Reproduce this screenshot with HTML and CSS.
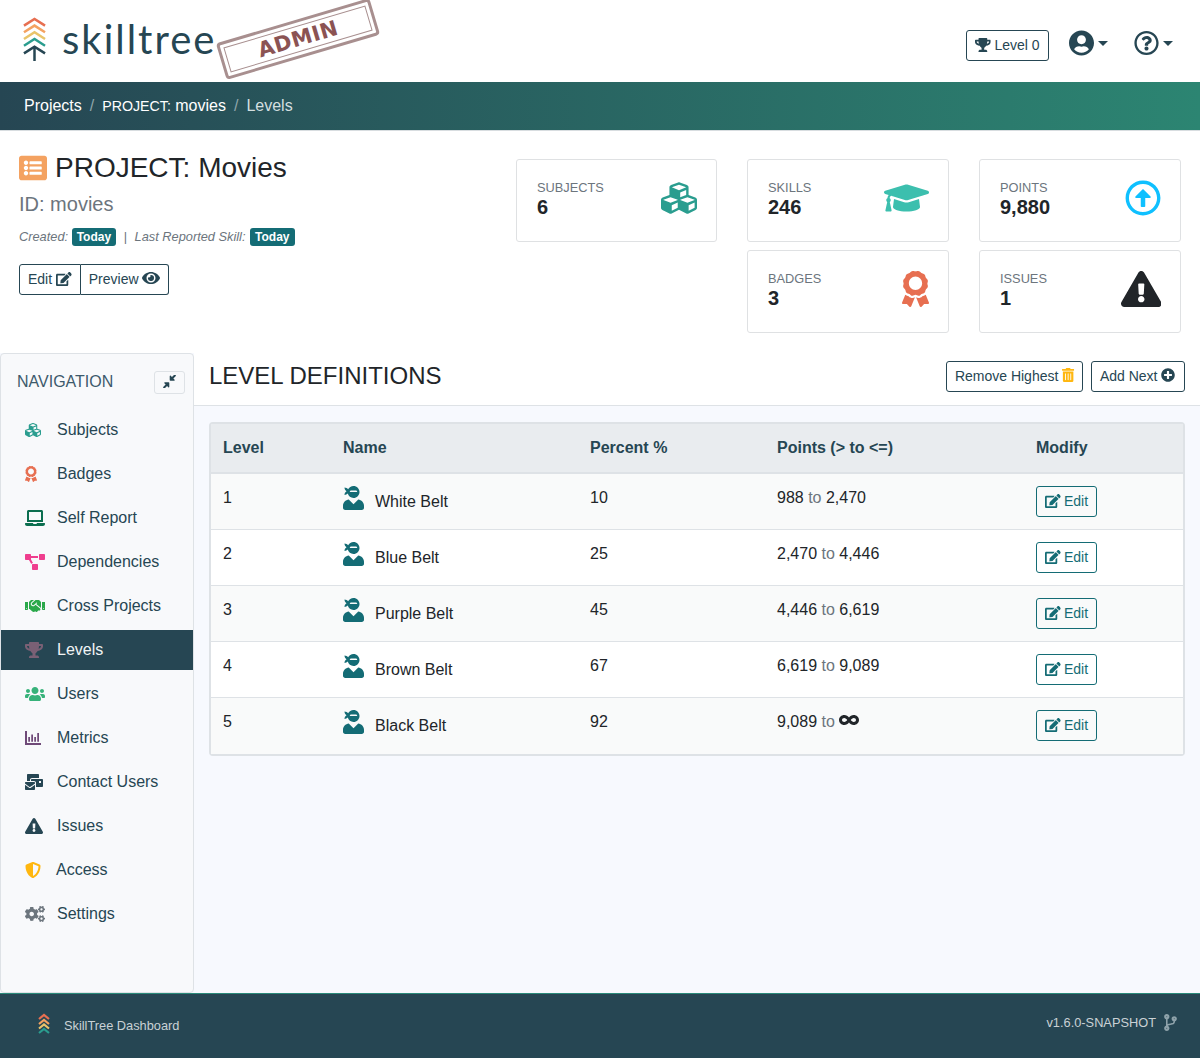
FILE: index.html
```html
<!DOCTYPE html>
<html lang="en">
<head>
<meta charset="utf-8">
<title>SkillTree Dashboard</title>
<link rel="stylesheet" href="styles.css">
</head>
<body>
<svg class="sprite" xmlns="http://www.w3.org/2000/svg">
<symbol id="trophy" viewBox="0 0 576 512"><path d="M552 64H448V24c0-13.3-10.7-24-24-24H152c-13.3 0-24 10.7-24 24v40H24C10.7 64 0 74.7 0 88v56c0 35.7 22.5 72.4 61.9 100.7 31.5 22.7 69.8 37.1 110 41.7C203.3 338.5 240 360 240 360v72h-48c-35.3 0-64 20.7-64 56v12c0 6.6 5.4 12 12 12h296c6.6 0 12-5.4 12-12v-12c0-35.3-28.7-56-64-56h-48v-72s36.7-21.5 68.1-73.6c40.3-4.6 78.6-19 110-41.7 39.3-28.3 61.9-65 61.9-100.7V88c0-13.3-10.7-24-24-24zM99.3 192.8C74.9 175.2 64 155.6 64 144v-16h64.2c1 32.6 5.8 61.2 12.8 86.2-15.1-5.2-29.2-12.4-41.7-21.4zM512 144c0 16.1-17.7 36.1-35.3 48.8-12.5 9-26.7 16.2-41.8 21.4 7-25 11.8-53.6 12.8-86.2H512v16z"/></symbol>
<symbol id="user-circle" viewBox="0 0 496 512"><path d="M248 8C111 8 0 119 0 256s111 248 248 248 248-111 248-248S385 8 248 8zm0 96c48.6 0 88 39.4 88 88s-39.4 88-88 88-88-39.4-88-88 39.4-88 88-88zm0 344c-58.7 0-111.3-26.6-146.5-68.2 18.8-35.4 55.6-59.8 98.5-59.8 2.4 0 4.8.4 7.1 1.1 13 4.2 26.6 6.9 40.9 6.9 14.3 0 28-2.7 40.9-6.9 2.3-.7 4.7-1.1 7.1-1.1 42.9 0 79.7 24.4 98.5 59.8C359.3 421.4 306.7 448 248 448z"/></symbol>
<symbol id="question" viewBox="0 0 512 512"><path d="M256 8C119.043 8 8 119.083 8 256c0 136.997 111.043 248 248 248s248-111.003 248-248C504 119.083 392.957 8 256 8zm0 448c-110.532 0-200-89.431-200-200 0-110.495 89.472-200 200-200 110.491 0 200 89.471 200 200 0 110.53-89.431 200-200 200zm107.244-255.2c0 67.052-72.421 68.084-72.421 92.863V300c0 6.627-5.373 12-12 12h-45.647c-6.627 0-12-5.373-12-12v-8.659c0-35.745 27.1-50.034 47.579-61.516 17.561-9.845 28.324-16.541 28.324-29.579 0-17.246-21.999-28.693-39.784-28.693-23.189 0-33.894 10.977-48.942 29.969-4.057 5.12-11.46 6.071-16.666 2.124l-27.824-21.098c-5.107-3.872-6.251-11.066-2.644-16.363C184.846 131.491 214.94 112 261.794 112c49.071 0 101.45 38.304 101.45 88.8zM298 368c0 23.159-18.841 42-42 42s-42-18.841-42-42 18.841-42 42-42 42 18.841 42 42z"/></symbol>
<symbol id="list-alt" viewBox="0 0 512 512"><path d="M464 480H48c-26.51 0-48-21.49-48-48V80c0-26.51 21.49-48 48-48h416c26.51 0 48 21.49 48 48v352c0 26.51-21.49 48-48 48zM128 120c-22.091 0-40 17.909-40 40s17.909 40 40 40 40-17.909 40-40-17.909-40-40-40zm0 96c-22.091 0-40 17.909-40 40s17.909 40 40 40 40-17.909 40-40-17.909-40-40-40zm0 96c-22.091 0-40 17.909-40 40s17.909 40 40 40 40-17.909 40-40-17.909-40-40-40zm288-136v-32c0-6.627-5.373-12-12-12H204c-6.627 0-12 5.373-12 12v32c0 6.627 5.373 12 12 12h200c6.627 0 12-5.373 12-12zm0 96v-32c0-6.627-5.373-12-12-12H204c-6.627 0-12 5.373-12 12v32c0 6.627 5.373 12 12 12h200c6.627 0 12-5.373 12-12zm0 96v-32c0-6.627-5.373-12-12-12H204c-6.627 0-12 5.373-12 12v32c0 6.627 5.373 12 12 12h200c6.627 0 12-5.373 12-12z"/></symbol>
<symbol id="edit" viewBox="0 0 576 512"><path d="M402.6 83.2l90.2 90.2c3.8 3.8 3.8 10 0 13.8L274.4 405.6l-92.8 10.3c-12.4 1.4-22.9-9.1-21.5-21.5l10.3-92.8L388.8 83.2c3.8-3.8 10-3.8 13.8 0zm162-22.9l-48.8-48.8c-15.2-15.2-39.9-15.2-55.2 0l-35.4 35.4c-3.8 3.8-3.8 10 0 13.8l90.2 90.2c3.8 3.8 10 3.8 13.8 0l35.4-35.4c15.2-15.3 15.2-40 0-55.2zM384 346.2V448H64V128h229.8c3.2 0 6.2-1.3 8.5-3.5l40-40c7.6-7.6 2.2-20.5-8.5-20.5H48C21.5 64 0 85.5 0 112v352c0 26.5 21.5 48 48 48h352c26.5 0 48-21.5 48-48V306.2c0-10.7-12.9-16-20.5-8.5l-40 40c-2.2 2.3-3.5 5.3-3.5 8.5z"/></symbol>
<symbol id="eye" viewBox="0 0 576 512"><path d="M572.52 241.4C518.29 135.59 410.93 64 288 64S57.68 135.64 3.48 241.41a32.35 32.35 0 0 0 0 29.19C57.71 376.41 165.07 448 288 448s230.32-71.64 284.52-177.41a32.35 32.35 0 0 0 0-29.19zM288 400a144 144 0 1 1 144-144 143.93 143.93 0 0 1-144 144zm0-240a95.31 95.31 0 0 0-25.31 3.79 47.85 47.85 0 0 1-66.9 66.9A95.78 95.78 0 1 0 288 160z"/></symbol>
<symbol id="cubes" viewBox="0 0 512 512"><path d="M488.6 250.2L392 214V105.5c0-15-9.3-28.4-23.4-33.7l-100-37.5c-8.1-3.1-17.1-3.1-25.3 0l-100 37.5c-14.1 5.3-23.4 18.7-23.4 33.7V214l-96.6 36.2C9.3 255.5 0 268.9 0 283.9V394c0 13.6 7.7 26.1 19.9 32.2l100 50c10.1 5.1 22.1 5.1 32.2 0l103.9-52 103.9 52c10.1 5.1 22.1 5.1 32.2 0l100-50c12.2-6.1 19.9-18.6 19.9-32.2V283.9c0-15-9.3-28.4-23.4-33.7zM358 214.8l-85 31.9v-68.2l85-37v73.3zM154 104.1l102-38.2 102 38.2v.6l-102 41.4-102-41.4v-.6zm84 291.1l-85 42.5v-79.1l85-38.8v75.4zm0-112l-102 41.4-102-41.4v-.6l102-38.2 102 38.2v.6zm240 112l-85 42.5v-79.1l85-38.8v75.4zm0-112l-102 41.4-102-41.4v-.6l102-38.2 102 38.2v.6z"/></symbol>
<symbol id="cap" viewBox="0 0 640 512"><path d="M622.34 153.2L343.4 67.5c-15.2-4.67-31.6-4.67-46.79 0L17.66 153.2c-23.54 7.23-23.54 38.36 0 45.59l48.63 14.94c-10.67 13.19-17.23 29.28-17.88 46.9C38.78 266.15 32 276.11 32 288c0 10.78 5.68 19.85 13.86 25.65L20.33 428.53C18.11 438.52 25.71 448 35.94 448h56.11c10.24 0 17.84-9.48 15.62-19.47L82.14 313.65C90.32 307.85 96 298.78 96 288c0-11.57-6.47-21.25-15.66-26.87.76-15.02 8.44-28.3 20.69-36.72L296.6 284.5c9.06 2.78 26.44 6.25 46.79 0l278.95-85.7c23.55-7.24 23.55-38.36 0-45.6zM352.79 315.09c-28.53 8.76-52.84 3.92-65.59 0l-145.02-44.55L128 384c0 35.35 85.96 64 192 64s192-28.65 192-64l-14.18-113.47-145.03 44.56z"/></symbol>
<symbol id="arrow-up" viewBox="0 0 512 512"><path d="M256 504c137 0 248-111 248-248S393 8 256 8 8 119 8 256s111 248 248 248zm0-448c110.5 0 200 89.5 200 200s-89.5 200-200 200S56 366.5 56 256 145.5 56 256 56zm20 328h-40c-6.6 0-12-5.4-12-12V256h-67c-10.7 0-16-12.9-8.5-20.5l99-99c4.7-4.7 12.3-4.7 17 0l99 99c7.6 7.6 2.2 20.5-8.5 20.5h-67v116c0 6.6-5.4 12-12 12z"/></symbol>
<symbol id="warn" viewBox="0 0 576 512"><path d="M569.517 440.013C587.975 472.007 564.806 512 527.94 512H48.054c-36.937 0-59.999-40.055-41.577-71.987L246.423 23.985c18.467-32.009 64.72-31.951 83.154 0l239.94 416.028zM288 354c-25.405 0-46 20.595-46 46s20.595 46 46 46 46-20.595 46-46-20.595-46-46-46zm-43.673-165.346l7.418 136c.347 6.364 5.609 11.346 11.982 11.346h48.546c6.373 0 11.635-4.982 11.982-11.346l7.418-136c.375-6.874-5.098-12.654-11.982-12.654h-63.383c-6.884 0-12.356 5.78-11.981 12.654z"/></symbol>
<symbol id="award" viewBox="0 0 384 512"><path d="M97.12 362.63c-8.69-8.69-4.16-6.24-25.12-11.85-9.51-2.55-17.87-7.45-25.43-13.32L1.2 448.7c-4.39 10.77 3.81 22.47 15.43 22.03l52.69-2.01L105.56 507c8 8.44 22.04 5.81 26.43-4.96l52.05-127.62c-10.84 6.04-22.87 9.58-35.31 9.58-19.5 0-37.82-7.59-51.61-21.37zM382.8 448.7l-45.37-111.24c-7.56 5.88-15.92 10.77-25.43 13.32-21.07 5.64-16.45 3.18-25.12 11.85-13.79 13.78-32.12 21.37-51.62 21.37-12.44 0-24.47-3.55-35.31-9.58L252 502.04c4.39 10.77 18.44 13.4 26.43 4.96l36.25-38.28 52.69 2.01c11.62.44 19.82-11.27 15.43-22.03zM263 340c15.28-15.55 17.03-14.21 38.79-20.14 13.89-3.79 24.75-14.84 28.47-28.98 7.48-28.4 5.54-24.97 25.95-45.75 10.17-10.35 14.14-25.44 10.42-39.58-7.47-28.38-7.48-24.42 0-52.83 3.72-14.14-.25-29.23-10.42-39.58-20.41-20.78-18.47-17.36-25.95-45.75-3.72-14.14-14.58-25.19-28.47-28.98-27.88-7.61-24.52-5.62-44.95-26.41-10.17-10.35-25-14.4-38.89-10.61-27.87 7.6-23.98 7.61-51.9 0-13.89-3.79-28.72.25-38.89 10.61-20.41 20.78-17.05 18.8-44.94 26.41-13.89 3.79-24.75 14.84-28.47 28.98-7.47 28.39-5.54 24.97-25.95 45.75-10.17 10.35-14.15 25.44-10.42 39.58 7.47 28.36 7.48 24.4 0 52.82-3.72 14.14.25 29.23 10.42 39.59 20.41 20.78 18.47 17.35 25.95 45.75 3.72 14.14 14.58 25.19 28.47 28.98C104.6 325.96 106.27 325 121 340c13.23 13.47 33.84 15.88 49.74 5.82a39.676 39.676 0 0 1 42.53 0c15.89 10.06 36.5 7.65 49.73-5.82zM97.66 175.96c0-53.03 42.24-96.02 94.34-96.02s94.34 42.99 94.34 96.02-42.24 96.02-94.34 96.02-94.34-42.99-94.34-96.02z"/></symbol>
<symbol id="laptop" viewBox="0 0 640 512"><path d="M624 416H381.54c-.74 19.81-14.71 32-32.74 32H288c-18.69 0-33.02-17.47-32.77-32H16c-8.8 0-16 7.2-16 16v16c0 35.2 28.8 64 64 64h512c35.2 0 64-28.8 64-64v-16c0-8.8-7.2-16-16-16zM576 48c0-26.4-21.6-48-48-48H112C85.6 0 64 21.6 64 48v336h512V48zm-64 272H128V64h384v256z"/></symbol>
<symbol id="diagram" viewBox="0 0 640 512"><path d="M384 320H256c-17.67 0-32 14.33-32 32v128c0 17.67 14.33 32 32 32h128c17.67 0 32-14.33 32-32V352c0-17.67-14.33-32-32-32zM192 32c0-17.67-14.33-32-32-32H32C14.33 0 0 14.33 0 32v128c0 17.67 14.33 32 32 32h95.72l73.16 128.04C211.98 300.98 232.4 288 256 288h.28L192 175.51V128h224V64H192V32zM608 0H480c-17.67 0-32 14.33-32 32v128c0 17.67 14.33 32 32 32h128c17.67 0 32-14.33 32-32V32c0-17.67-14.33-32-32-32z"/></symbol>
<symbol id="handshake" viewBox="0 0 640 512"><path d="M434.7 64h-85.9c-8 0-15.7 3-21.6 8.4l-98.3 90c-.1.1-.2.3-.3.4-16.6 15.6-16.3 40.5-2.1 56 12.7 13.9 39.4 17.6 56.1 2.7.1-.1.3-.1.4-.2l79.9-73.2c6.5-5.9 16.7-5.5 22.6 1 6 6.5 5.5 16.6-1 22.6l-26.1 23.9L504 313.8c2.9 2.4 5.5 5 7.9 7.7V128l-54.6-54.6c-5.9-6-14.1-9.4-22.6-9.4zM544 128.2v223.9c0 17.7 14.3 32 32 32h64V128.2h-96zm48 223.9c-8.8 0-16-7.2-16-16s7.2-16 16-16 16 7.2 16 16-7.2 16-16 16zM0 384h64c17.7 0 32-14.3 32-32V128.2H0V384zm48-63.9c8.8 0 16 7.2 16 16s-7.2 16-16 16-16-7.2-16-16c0-8.9 7.2-16 16-16zm435.9 18.6L334.6 217.5l-30 27.5c-29.7 27.1-75.2 24.5-101.7-4.4-26.9-29.4-24.8-74.9 4.4-101.7L289.1 64h-83.8c-8.5 0-16.6 3.4-22.6 9.4L128 128v223.9h18.3l90.5 81.9c27.4 22.3 67.7 18.1 90-9.3l.2-.2 17.9 15.5c15.9 13 39.4 10.5 52.3-5.4l31.4-38.6 5.4 4.4c13.7 11.1 33.9 9.1 45-4.7l9.5-11.7c11.2-13.8 9.1-33.9-4.6-45.1z"/></symbol>
<symbol id="users" viewBox="0 0 640 512"><path d="M96 224c35.3 0 64-28.7 64-64s-28.7-64-64-64-64 28.7-64 64 28.7 64 64 64zm448 0c35.3 0 64-28.7 64-64s-28.7-64-64-64-64 28.7-64 64 28.7 64 64 64zm32 32h-64c-17.6 0-33.5 7.1-45.1 18.6 40.3 22.1 68.9 62 75.1 109.4h66c17.7 0 32-14.3 32-32v-32c0-35.3-28.7-64-64-64zm-256 0c61.9 0 112-50.1 112-112S381.9 32 320 32 208 82.1 208 144s50.1 112 112 112zm76.8 32h-8.3c-20.8 10-43.9 16-68.5 16s-47.6-6-68.5-16h-8.3C179.6 288 128 339.6 128 403.2V432c0 26.5 21.5 48 48 48h288c26.5 0 48-21.5 48-48v-28.8c0-63.6-51.6-115.2-115.2-115.2zm-223.7-13.4C161.5 263.1 145.6 256 128 256H64c-35.3 0-64 28.7-64 64v32c0 17.7 14.3 32 32 32h65.9c6.3-47.4 34.9-87.3 75.2-109.4z"/></symbol>
<symbol id="bars" viewBox="0 0 512 512"><path d="M0 32h64v384h448v64H0z"/><rect x="104" y="224" width="56" height="152"/><rect x="200" y="144" width="56" height="232"/><rect x="296" y="224" width="56" height="152"/><rect x="392" y="96" width="56" height="280"/></symbol>
<symbol id="mail" viewBox="0 0 576 512"><path d="M160 448c-25.6 0-51.2-22.4-64-32-64-44.8-83.2-60.8-96-70.4V480c0 17.67 14.33 32 32 32h256c17.67 0 32-14.33 32-32V345.6c-12.8 9.6-32 25.6-96 70.4-12.8 9.6-38.4 32-64 32zm128-192H32c-17.67 0-32 14.33-32 32v16c25.6 19.2 22.4 19.2 115.2 86.4 9.6 3.2 28.8 25.6 44.8 25.6s35.2-22.4 44.8-28.8c92.8-67.2 89.6-67.2 115.2-86.4V288c0-17.67-14.33-32-32-32zm256-96H224c-17.67 0-32 14.33-32 32v32h96c33.21 0 60.59 25.42 63.71 57.82l.29-.22V416h192c17.67 0 32-14.33 32-32V192c0-17.67-14.33-32-32-32zm-32 128h-64v-64h64v64zm-352-96c0-35.29 28.71-64 64-64h224V32c0-17.67-14.33-32-32-32H96C78.33 0 64 14.33 64 32v192h96v-32z"/></symbol>
<symbol id="shield" viewBox="0 0 512 512"><path d="M466.5 83.7l-192-80a48.15 48.15 0 0 0-36.9 0l-192 80C27.7 91.1 16 108.6 16 128c0 198.5 114.5 335.7 221.5 380.3 11.8 4.9 25.1 4.9 36.9 0C360.1 472.6 496 349.3 496 128c0-19.4-11.7-36.9-29.5-44.3zM256.1 446.3l-.1-381 175.9 73.3c-3.3 151.4-82.1 261.1-175.8 307.7z"/></symbol>
<symbol id="cogs" viewBox="0 0 640 512"><path d="M512.1 191l-8.2 14.3c-3 5.3-9.4 7.5-15.1 5.4-11.8-4.4-22.6-10.7-32.1-18.6-4.6-3.8-5.8-10.5-2.8-15.7l8.2-14.3c-6.9-8-12.3-17.3-15.9-27.4h-16.5c-6 0-11.2-4.3-12.2-10.3-2-12-2.1-24.6 0-37.1 1-6 6.2-10.4 12.2-10.4h16.5c3.6-10.1 9-19.4 15.9-27.4l-8.2-14.3c-3-5.2-1.9-11.9 2.8-15.7 9.5-7.9 20.4-14.2 32.1-18.6 5.7-2.1 12.1.1 15.1 5.4l8.2 14.3c10.5-1.9 21.2-1.9 31.7 0L552 6.3c3-5.3 9.4-7.5 15.1-5.4 11.8 4.4 22.6 10.7 32.1 18.6 4.6 3.8 5.8 10.5 2.8 15.7l-8.2 14.3c6.9 8 12.3 17.3 15.9 27.4h16.5c6 0 11.2 4.3 12.2 10.3 2 12 2.1 24.6 0 37.1-1 6-6.2 10.4-12.2 10.4h-16.5c-3.6 10.1-9 19.4-15.9 27.4l8.2 14.3c3 5.2 1.9 11.9-2.8 15.7-9.5 7.9-20.4 14.2-32.1 18.6-5.7 2.1-12.1-.1-15.1-5.4l-8.2-14.3c-10.4 1.9-21.2 1.9-31.7 0zm-10.5-58.8c38.5 29.6 82.4-14.3 52.8-52.8-38.5-29.7-82.4 14.3-52.8 52.8zM386.3 286.1l33.7 16.8c10.1 5.8 14.5 18.1 10.5 29.1-8.9 24.2-26.4 46.4-42.6 65.8-7.4 8.9-20.2 11.1-30.3 5.3l-29.1-16.8c-16 13.7-34.6 24.6-54.9 31.7v33.6c0 11.6-8.3 21.6-19.7 23.6-24.6 4.2-50.4 4.4-75.9 0-11.5-2-20-11.9-20-23.6V418c-20.3-7.2-38.9-18-54.9-31.7L74 403c-10 5.8-22.9 3.6-30.3-5.3-16.2-19.4-33.3-41.6-42.2-65.7-4-10.9.4-23.2 10.5-29.1l33.3-16.8c-3.9-20.9-3.9-42.4 0-63.4L12 205.8c-10.1-5.8-14.6-18.1-10.5-29 8.9-24.2 26-46.4 42.2-65.8 7.4-8.9 20.2-11.1 30.3-5.3l29.1 16.8c16-13.7 34.6-24.6 54.9-31.7V57.1c0-11.5 8.2-21.5 19.6-23.5 24.6-4.2 50.5-4.4 76-.1 11.5 2 20 11.9 20 23.6v33.6c20.3 7.2 38.9 18 54.9 31.7l29.1-16.8c10-5.8 22.9-3.6 30.3 5.3 16.2 19.4 33.2 41.6 42.1 65.8 4 10.9.1 23.2-10 29.1l-33.7 16.8c3.9 21 3.9 42.5 0 63.5zm-117.6 21.1c59.2-77-28.7-164.9-105.7-105.7-59.2 77 28.7 164.9 105.7 105.7zm243.4 182.7l-8.2 14.3c-3 5.3-9.4 7.5-15.1 5.4-11.8-4.4-22.6-10.7-32.1-18.6-4.6-3.8-5.8-10.5-2.8-15.7l8.2-14.3c-6.9-8-12.3-17.3-15.9-27.4h-16.5c-6 0-11.2-4.3-12.2-10.3-2-12-2.1-24.6 0-37.1 1-6 6.2-10.4 12.2-10.4h16.5c3.6-10.1 9-19.4 15.9-27.4l-8.2-14.3c-3-5.2-1.9-11.9 2.8-15.7 9.5-7.9 20.4-14.2 32.1-18.6 5.7-2.1 12.1.1 15.1 5.4l8.2 14.3c10.5-1.9 21.2-1.9 31.7 0l8.2-14.3c3-5.3 9.4-7.5 15.1-5.4 11.8 4.4 22.6 10.7 32.1 18.6 4.6 3.8 5.8 10.5 2.8 15.7l-8.2 14.3c6.9 8 12.3 17.3 15.9 27.4h16.5c6 0 11.2 4.3 12.2 10.3 2 12 2.1 24.6 0 37.1-1 6-6.2 10.4-12.2 10.4h-16.5c-3.6 10.1-9 19.4-15.9 27.4l8.2 14.3c3 5.2 1.9 11.9-2.8 15.7-9.5 7.9-20.4 14.2-32.1 18.6-5.7 2.1-12.1-.1-15.1-5.4l-8.2-14.3c-10.4 1.9-21.2 1.9-31.7 0zM501.6 431c38.5 29.6 82.4-14.3 52.8-52.8-38.5-29.6-82.4 14.3-52.8 52.8z"/></symbol>
<symbol id="ninja" viewBox="0 0 448 512"><path d="M325.4 289.2L224 390.6 122.6 289.2C54 295.3 0 352.2 0 422.4V464c0 26.5 21.5 48 48 48h352c26.5 0 48-21.5 48-48v-41.6c0-70.2-54-127.1-122.6-133.2zM32 192c27.3 0 51.8-11.5 69.2-29.7 15.1 53.9 64 93.7 122.8 93.7 70.7 0 128-57.3 128-128S294.7 0 224 0c-50.4 0-93.6 29.4-114.5 71.8C92.1 47.8 64 32 32 32c0 33.4 17.1 62.8 43.1 80-26 17.2-43.1 46.6-43.1 80zm144-96h96c17.7 0 32 14.3 32 32H144c0-17.7 14.3-32 32-32z"/></symbol>
<symbol id="trash" viewBox="0 0 448 512"><path d="M32 464a48 48 0 0 0 48 48h288a48 48 0 0 0 48-48V128H32zm272-256a16 16 0 0 1 32 0v224a16 16 0 0 1-32 0zm-96 0a16 16 0 0 1 32 0v224a16 16 0 0 1-32 0zm-96 0a16 16 0 0 1 32 0v224a16 16 0 0 1-32 0zM432 32H312l-9.4-18.7A24 24 0 0 0 281.1 0H166.800a23.720 23.720 0 0 0-21.400 13.300L136 32H16A16 16 0 0 0 0 48v32a16 16 0 0 0 16 16h416a16 16 0 0 0 16-16V48a16 16 0 0 0-16-16z"/></symbol>
<symbol id="plus" viewBox="0 0 512 512"><path d="M256 8C119 8 8 119 8 256s111 248 248 248 248-111 248-248S393 8 256 8zm144 276c0 6.6-5.4 12-12 12h-92v92c0 6.6-5.4 12-12 12h-56c-6.6 0-12-5.4-12-12v-92h-92c-6.6 0-12-5.4-12-12v-56c0-6.6 5.4-12 12-12h92v-92c0-6.6 5.4-12 12-12h56c6.6 0 12 5.4 12 12v92h92c6.6 0 12 5.4 12 12v56z"/></symbol>
<symbol id="infinity" viewBox="0 0 640 512"><path d="M471.1 96C405 96 353.3 137.3 320 174.6 286.7 137.3 235 96 168.9 96 75.8 96 0 167.8 0 256s75.8 160 168.9 160c66.1 0 117.8-41.3 151.1-78.6 33.3 37.3 85 78.6 151.1 78.6 93.1 0 168.9-71.8 168.9-160S564.2 96 471.1 96zM168.9 320c-40.2 0-72.9-28.7-72.9-64s32.7-64 72.9-64c38.2 0 73.4 36.1 94 64-20.4 27.6-55.9 64-94 64zm302.2 0c-38.2 0-73.4-36.1-94-64 20.4-27.6 55.9-64 94-64 40.2 0 72.9 28.7 72.9 64s-32.7 64-72.9 64z"/></symbol>
<symbol id="compress" viewBox="0 0 512 512"><path d="M224 288H72c-21 0-32 26-17 41l49 47-96 96c-8 8-8 20 0 28l28 28c8 8 20 8 28 0l96-96 47 49c15 15 41 4 41-17V312c0-13-11-24-24-24zM288 224h152c21 0 32-26 17-41l-49-47 96-96c8-8 8-20 0-28L476 -16c-8-8-20-8-28 0l-96 96-47-49c-15-15-41-4-41 17v152c0 13 11 24 24 24z"/></symbol>
<symbol id="branch" viewBox="0 0 384 512"><path d="M384 144c0-44.2-35.8-80-80-80s-80 35.8-80 80c0 36.4 24.3 67.1 57.5 76.8-.6 16.1-4.2 28.5-11 36.9-15.4 19.2-49.3 22.4-85.2 25.7-28.2 2.6-57.4 5.4-81.3 16.9v-144c32.5-10.2 56-40.5 56-76.3 0-44.2-35.8-80-80-80S0 35.8 0 80c0 35.8 23.5 66.1 56 76.3v199.3C23.5 365.9 0 396.2 0 432c0 44.2 35.8 80 80 80s80-35.8 80-80c0-34-21.2-63.1-51.2-74.6 3.1-5.2 7.8-9.8 14.9-13.4 16.2-8.2 40.4-10.4 66.1-12.8 42.2-3.9 90-8.4 118.2-43.4 14-17.4 21.1-39.8 21.6-67.9 31.6-10.8 54.4-40.7 54.4-75.9zM80 64c8.8 0 16 7.2 16 16s-7.2 16-16 16-16-7.2-16-16 7.2-16 16-16zm0 384c-8.8 0-16-7.2-16-16s7.2-16 16-16 16 7.2 16 16-7.2 16-16 16zm224-320c8.8 0 16 7.2 16 16s-7.2 16-16 16-16-7.2-16-16 7.2-16 16-16z"/></symbol>
</svg>

<header class="topbar">
  <a class="brand">
    <svg class="brand-mark" viewBox="0 0 24 46" fill="none" stroke-width="2.6">
      <path stroke="#e76f51" d="M1 9 12 2l11 7"/>
      <path stroke="#f4a261" d="M1 16 12 9l11 7"/>
      <path stroke="#e9c46a" d="M1 23 12 16l11 7"/>
      <path stroke="#2a9d8f" d="M1 30 12 23l11 7"/>
      <path stroke="#264653" d="M1 38 12 31l11 7M12 31v15"/>
    </svg>
    <span class="brand-name">skilltree</span>
  </a>
  <div class="stamp"><div class="stamp-inner">ADMIN</div></div>
  <div class="top-actions">
    <a class="btn level-btn"><svg class="i w9"><use href="#trophy"/></svg> Level 0</a>
    <a class="top-menu"><svg class="top-icon"><use href="#user-circle"/></svg><span class="caret"></span></a>
    <a class="top-menu"><svg class="top-icon"><use href="#question"/></svg><span class="caret"></span></a>
  </div>
</header>

<nav class="crumbs">
  <a class="crumb">Projects</a>
  <span class="sep">/</span>
  <span class="crumb"><span class="crumb-key">PROJECT:</span> movies</span>
  <span class="sep">/</span>
  <span class="crumb current">Levels</span>
</nav>

<section class="project">
  <div class="project-info">
    <h1 class="project-title"><svg class="title-icon"><use href="#list-alt"/></svg>PROJECT: Movies</h1>
    <div class="project-id">ID: movies</div>
    <div class="project-dates">
      <em>Created:</em> <span class="badge">Today</span>
      <span class="pipe">|</span>
      <em>Last Reported Skill:</em> <span class="badge badge-last">Today</span>
    </div>
    <div class="btn-group">
      <a class="btn">Edit <svg class="i w9"><use href="#edit"/></svg></a>
      <a class="btn">Preview <svg class="i w9 big"><use href="#eye"/></svg></a>
    </div>
  </div>
  <div class="stats">
    <div class="stat"><div><div class="stat-label">Subjects</div><div class="stat-value">6</div></div><svg class="stat-icon c-cubes"><use href="#cubes"/></svg></div>
    <div class="stat"><div><div class="stat-label">Skills</div><div class="stat-value">246</div></div><svg class="stat-icon wide c-cap"><use href="#cap"/></svg></div>
    <div class="stat"><div><div class="stat-label">Points</div><div class="stat-value">9,880</div></div><svg class="stat-icon c-points"><use href="#arrow-up"/></svg></div>
    <div class="stat second-col"><div><div class="stat-label">Badges</div><div class="stat-value">3</div></div><svg class="stat-icon narrow c-award"><use href="#award"/></svg></div>
    <div class="stat"><div><div class="stat-label">Issues</div><div class="stat-value">1</div></div><svg class="stat-icon warnw c-warn"><use href="#warn"/></svg></div>
  </div>
</section>

<div class="workspace">
  <aside class="sidebar">
    <div class="side-head">
      <span>NAVIGATION</span>
      <button class="collapse"><svg class="i"><use href="#compress"/></svg></button>
    </div>
    <ul class="side-nav">
      <li class="side-item"><span class="side-ic"><svg class="i c-cubes"><use href="#cubes"/></svg></span>Subjects</li>
      <li class="side-item"><span class="side-ic"><svg class="i w75 c-award"><use href="#award"/></svg></span>Badges</li>
      <li class="side-item"><span class="side-ic"><svg class="i w125 c-laptop"><use href="#laptop"/></svg></span>Self Report</li>
      <li class="side-item"><span class="side-ic"><svg class="i w125 c-dep"><use href="#diagram"/></svg></span>Dependencies</li>
      <li class="side-item"><span class="side-ic"><svg class="i w125 c-cross"><use href="#handshake"/></svg></span>Cross Projects</li>
      <li class="side-item active"><span class="side-ic"><svg class="i w9 c-trophy"><use href="#trophy"/></svg></span>Levels</li>
      <li class="side-item"><span class="side-ic"><svg class="i w125 c-users"><use href="#users"/></svg></span>Users</li>
      <li class="side-item"><span class="side-ic"><svg class="i c-metrics"><use href="#bars"/></svg></span>Metrics</li>
      <li class="side-item"><span class="side-ic"><svg class="i w9 c-dark"><use href="#mail"/></svg></span>Contact Users</li>
      <li class="side-item"><span class="side-ic"><svg class="i w9 c-dark"><use href="#warn"/></svg></span>Issues</li>
      <li class="side-item tight"><span class="side-ic"><svg class="i c-access"><use href="#shield"/></svg></span>Access</li>
      <li class="side-item"><span class="side-ic"><svg class="i w125 c-gray"><use href="#cogs"/></svg></span>Settings</li>
    </ul>
  </aside>
  <main class="content">
    <div class="content-head">
      <h2 class="page-title">LEVEL DEFINITIONS</h2>
      <div class="head-actions">
        <a class="btn btn-remove">Remove Highest <svg class="i w875 c-access"><use href="#trash"/></svg></a>
        <a class="btn btn-add">Add Next <svg class="i"><use href="#plus"/></svg></a>
      </div>
    </div>
    <div class="table-wrap">
      <table class="levels">
        <colgroup><col class="col-level"><col class="col-name"><col class="col-pct"><col class="col-pts"><col class="col-mod"></colgroup>
        <thead><tr><th>Level</th><th>Name</th><th>Percent %</th><th>Points (&gt; to &lt;=)</th><th>Modify</th></tr></thead>
        <tbody>
          <tr><td>1</td><td><svg class="ninja"><use href="#ninja"/></svg>White Belt</td><td>10</td><td>988 <span class="to">to</span> 2,470</td><td><a class="btn teal"><svg class="i w9"><use href="#edit"/></svg> Edit</a></td></tr>
          <tr><td>2</td><td><svg class="ninja"><use href="#ninja"/></svg>Blue Belt</td><td>25</td><td>2,470 <span class="to">to</span> 4,446</td><td><a class="btn teal"><svg class="i w9"><use href="#edit"/></svg> Edit</a></td></tr>
          <tr><td>3</td><td><svg class="ninja"><use href="#ninja"/></svg>Purple Belt</td><td>45</td><td>4,446 <span class="to">to</span> 6,619</td><td><a class="btn teal"><svg class="i w9"><use href="#edit"/></svg> Edit</a></td></tr>
          <tr><td>4</td><td><svg class="ninja"><use href="#ninja"/></svg>Brown Belt</td><td>67</td><td>6,619 <span class="to">to</span> 9,089</td><td><a class="btn teal"><svg class="i w9"><use href="#edit"/></svg> Edit</a></td></tr>
          <tr><td>5</td><td><svg class="ninja"><use href="#ninja"/></svg>Black Belt</td><td>92</td><td>9,089 <span class="to">to</span> <svg class="inf"><use href="#infinity"/></svg></td><td><a class="btn teal"><svg class="i w9"><use href="#edit"/></svg> Edit</a></td></tr>
        </tbody>
      </table>
    </div>
  </main>
</div>

<footer class="footer">
  <div class="foot-left">
    <svg class="foot-mark" viewBox="0 0 12 21" fill="none" stroke-width="2.2">
      <path stroke="#e76f51" d="M1 6 6 2l5 4"/>
      <path stroke="#f4a261" d="M1 11 6 7l5 4"/>
      <path stroke="#e9c46a" d="M1 15.500 6 11.500l5 4"/>
      <path stroke="#2a9d8f" d="M1 20 6 16l5 4"/>
    </svg>
    <span>SkillTree Dashboard</span>
  </div>
  <div class="foot-right">v1.6.0-SNAPSHOT <svg class="branch"><use href="#branch"/></svg></div>
</footer>
</body>
</html>
```
FILE: styles.css
```css
* { box-sizing: border-box; }
html, body { margin: 0; padding: 0; }
body {
  font-family: "Liberation Sans", Arial, sans-serif;
  font-size: 16px;
  line-height: 1.5;
  color: #212529;
  background: #f7f9fe;
  min-height: 1058px;
  display: flex;
  flex-direction: column;
}
.sprite { display: none; }
.i { width: 1em; height: 1em; fill: currentColor; vertical-align: -0.125em; display: inline-block; }
.w9 { width: 1.125em; }
.w875 { width: .875em; }
.w75 { width: .75em; }
.w125 { width: 1.25em; }
.i.big { font-size: 16px; }

.topbar {
  position: relative;
  height: 82px;
  background: #fff;
  display: flex;
  align-items: flex-start;
  justify-content: space-between;
  padding: 16px 27.400px 0 23px;
}
.brand { display: flex; align-items: flex-start; color: #264653; }
.brand-mark { width: 23px; height: 46px; }
.brand-name {
  font-family: Lato, sans-serif;
  font-size: 40px;
  line-height: 46px;
  margin-left: 16px;
  letter-spacing: 2px;
  color: #264653;
}
.stamp {
  position: absolute;
  left: 218px;
  top: 20px;
  width: 160px;
  height: 38px;
  padding: 3px;
  border: 3px solid #a88f8f;
  border-radius: 4px;
  transform: rotate(-16.500deg);
  background: #fff;
}
.stamp-inner {
  height: 100%;
  border: 1px solid #a88f8f;
  text-align: center;
  font-family: "DejaVu Sans", sans-serif;
  font-weight: 700;
  font-size: 21px;
  line-height: 25px;
  letter-spacing: .5px;
  color: #8b5353;
}
.top-actions { display: flex; align-items: flex-start; padding-top: 14px; }
.btn {
  display: inline-block;
  font-size: 14px;
  line-height: 21px;
  padding: 4px 8px;
  border: 1px solid #264653;
  border-radius: 3px;
  color: #264653;
  background: transparent;
  white-space: nowrap;
}
.level-btn { margin-right: 20px; }
.top-menu { display: flex; align-items: center; color: #264653; margin-right: 26px; height: 26px; }
.top-menu:last-child { margin-right: 0; }
.top-icon { width: 25px; height: 26px; fill: currentColor; }
.caret {
  margin-left: 4px;
  width: 0;
  height: 0;
  border-left: 5px solid transparent;
  border-right: 5px solid transparent;
  border-top: 5px solid #264653;
}

.crumbs {
  height: 49px;
  padding: 12px 24px;
  background: linear-gradient(90deg, #264653 0%, #2c8572 100%);
  border-bottom: 1px solid #d8dde0;
  color: #fff;
  display: flex;
  align-items: center;
  gap: 8px;
}
.crumb { color: #fff; }
.crumb-key { font-size: 14.200px; }
.crumb.current { color: #d4dfe0; }
.sep { color: #8fa6ac; }

.project {
  height: 222px;
  background: #fff;
  display: flex;
  justify-content: space-between;
  padding: 28px 19px 20px;
}
.project-title {
  margin: -8px 0 0;
  font-size: 28px;
  font-weight: 400;
  line-height: 34px;
  display: flex;
  align-items: center;
  gap: 8px;
}
.title-icon { width: 28px; height: 28px; fill: #f4a261; }
.project-id { margin-top: 4px; font-size: 20px; line-height: 30px; color: #6c757d; }
.project-dates { margin-top: 8px; font-size: 12.800px; line-height: 20px; color: #6c757d; }
.badge {
  display: inline-block;
  padding: 2px 5px;
  font-size: 12px;
  line-height: 14px;
  font-weight: 700;
  font-style: normal;
  color: #fff;
  background: #146c75;
  border-radius: 3px;
}
.badge-last { margin-left: 1px; }
.pipe { margin: 0 4px; }
.btn-group { display: inline-flex; margin-top: 17px; }
.btn-group .btn:first-child { border-radius: 3px 0 0 3px; }
.btn-group .btn:last-child { border-radius: 0 3px 3px 0; border-left: 0; }

.stats { display: grid; grid-template-columns: 201px 202px 202px; grid-auto-rows: 83px; column-gap: 30px; row-gap: 8px; width: 665px; }
.second-col { grid-column: 2; }
.stat {
  display: flex;
  justify-content: space-between;
  align-items: flex-start;
  border: 1px solid #dfe1e3;
  border-radius: 3px;
  background: #fff;
  padding: 20px 19px 0 20px;
}
.stat-label { font-size: 12.800px; line-height: 16px; text-transform: uppercase; color: #6c757d; }
.stat-value { font-size: 20px; line-height: 22px; font-weight: 700; color: #212529; }
.stat-icon { width: 36px; height: 36px; }
.stat-icon.wide { width: 45px; }
.stat-icon.narrow { width: 27px; }
.stat-icon.warnw { width: 40.500px; }
.c-cubes { fill: #2a9d8f; }
.c-cap { fill: #3cbfae; }
.c-points { fill: #0fc0ff; }
.c-award { fill: #e76f51; }
.c-warn { fill: #212529; }
.c-laptop { fill: #0b6e4f; }
.c-dep { fill: #ef3e8e; }
.c-cross { fill: #2aa84a; }
.c-trophy { fill: #7a6075; }
.c-users { fill: #37b27a; }
.c-metrics { fill: #6f4a78; }
.c-dark { fill: #264653; }
.c-access { fill: #ffb70f; }
.c-gray { fill: #6c757d; }

.workspace { flex: 1; display: flex; align-items: stretch; }
.sidebar {
  width: 194px;
  flex: none;
  background: #f8f9fb;
  border: 1px solid #dee2e6;
  border-radius: 4px;
  color: #264653;
}
.side-head {
  display: flex;
  align-items: center;
  justify-content: space-between;
  height: 56px;
  padding: 0 8px 0 16px;
  color: #3d5a6c;
}
.collapse {
  width: 31px;
  height: 23px;
  padding: 0;
  border: 1px solid #dee2e6;
  border-radius: 3px;
  background: #f8f9fb;
  font-size: 13px;
  line-height: 1;
  color: #264653;
}
.side-nav { list-style: none; margin: 0; padding: 0; }
.side-item { display: flex; align-items: center; height: 40px; margin-bottom: 4px; padding-left: 24px; }
.side-ic { width: 20px; margin-right: 12px; display: flex; font-size: 16px; }
.side-item.tight .side-ic { margin-right: 11px; }
.side-item.active { background: #264653; color: #f1f4f5; }

.content { flex: 1; min-width: 0; }
.content-head {
  display: flex;
  align-items: center;
  justify-content: space-between;
  height: 53px;
  background: #fff;
  border-bottom: 1px solid #dee2e6;
  padding: 0 15px;
}
.page-title { margin: 0 0 8px; font-size: 24px; font-weight: 400; line-height: 29px; color: #212529; }
.head-actions { display: flex; gap: 8px; margin-bottom: 6px; }
.btn-remove .i { margin-right: -.6px; }
.btn-add { padding-right: 8.600px; }
.table-wrap { margin: 16px 15px 0; border: 2px solid #dee2e6; border-radius: 4px; }
.levels { width: 100%; table-layout: fixed; border-collapse: collapse; }
.col-level { width: 120px; }
.col-name { width: 247px; }
.col-pct { width: 187px; }
.col-pts { width: 259px; }
.levels th {
  height: 49px;
  padding: 11px 12px;
  text-align: left;
  font-weight: 700;
  color: #264653;
  background: #e9ecef;
  border-bottom: 2px solid #dee2e6;
}
.levels td { height: 56px; padding: 12px; vertical-align: top; border-bottom: 1px solid #dee2e6; background: #fff; }
.levels tbody tr:nth-child(odd) td { background: #f9fafa; }
.levels tbody tr:last-child td { border-bottom: 0; }
.ninja { width: 21px; height: 24px; fill: #146c75; margin-right: 11px; vertical-align: -3px; }
.to { color: #6c757d; }
.inf { width: 20px; height: 16px; fill: #212529; vertical-align: -1px; }
.btn.teal { color: #146c75; border-color: #146c75; }
.btn.teal .i { margin-right: -.7px; }

.footer {
  height: 65px;
  background: #264653;
  border-top: 1px solid #2a8a7a;
  display: flex;
  justify-content: space-between;
  color: #c9d1d5;
  font-size: 12.800px;
  padding: 0 23px 0 38px;
}
.foot-left { display: flex; align-items: center; gap: 14px; height: 63px; }
.foot-mark { width: 12px; height: 21px; margin-top: -4px; }
.foot-right { display: flex; align-items: center; gap: 8px; height: 57px; }
.branch { width: 13px; height: 17px; fill: #8ea2aa; }
```
